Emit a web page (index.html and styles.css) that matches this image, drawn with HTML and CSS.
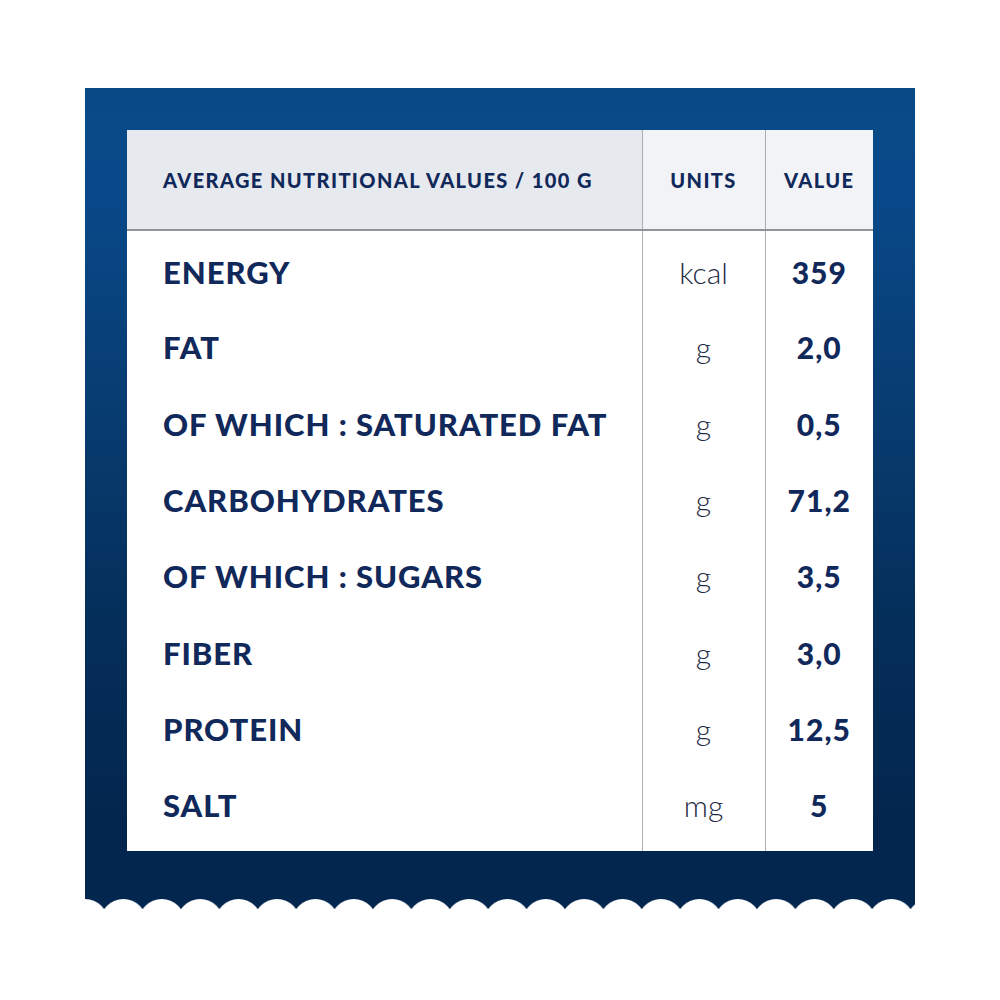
FILE: index.html
```html
<!DOCTYPE html>
<html lang="en">
<head>
<meta charset="utf-8">
<title>Nutritional values</title>
<link rel="stylesheet" href="styles.css">
</head>
<body>
<div class="wrap">
  <div class="panel">
    <table class="nutri">
      <colgroup>
        <col class="c-name"><col class="c-unit"><col class="c-val">
      </colgroup>
      <thead>
        <tr>
          <th class="h-name">AVERAGE NUTRITIONAL VALUES / 100 G</th>
          <th class="h-unit">UNITS</th>
          <th class="h-val">VALUE</th>
        </tr>
      </thead>
      <tbody>
        <tr><td class="name">ENERGY</td><td class="unit">kcal</td><td class="val">359</td></tr>
        <tr><td class="name">FAT</td><td class="unit">g</td><td class="val">2,0</td></tr>
        <tr><td class="name">OF WHICH : SATURATED FAT</td><td class="unit">g</td><td class="val">0,5</td></tr>
        <tr><td class="name">CARBOHYDRATES</td><td class="unit">g</td><td class="val">71,2</td></tr>
        <tr><td class="name">OF WHICH : SUGARS</td><td class="unit">g</td><td class="val">3,5</td></tr>
        <tr><td class="name">FIBER</td><td class="unit">g</td><td class="val">3,0</td></tr>
        <tr><td class="name">PROTEIN</td><td class="unit">g</td><td class="val">12,5</td></tr>
        <tr class="last"><td class="name">SALT</td><td class="unit">mg</td><td class="val">5</td></tr>
      </tbody>
    </table>
  </div>
  <svg class="scallop" width="830" height="15" viewBox="0 0 830 15" aria-hidden="true">
    <defs>
      <pattern id="bumps" patternUnits="userSpaceOnUse" width="38.4" height="15" x="-19.2" y="0">
        <circle cx="19.2" cy="27" r="23" fill="#ffffff"/>
      </pattern>
    </defs>
    <rect x="0" y="0" width="830" height="15" fill="#03264e"/>
    <rect x="0" y="0" width="830" height="15" fill="url(#bumps)"/>
  </svg>
</div>
</body>
</html>
```
FILE: styles.css
```css
html, body {
  margin: 0;
  padding: 0;
  background: #ffffff;
}

.wrap {
  width: 830px;
  padding: 88px 0 0 85px;
}

.panel {
  width: 830px;
  box-sizing: border-box;
  padding: 42px 42px 44px 42px;
  background: linear-gradient(180deg, #084a86 0%, #09498a 12%, #073a6c 45%, #052f5b 65%, #03264e 90%, #03264e 100%);
}

.scallop {
  display: block;
}

.nutri {
  width: 746px;
  height: 721px;
  border-collapse: collapse;
  table-layout: fixed;
  background: #ffffff;
  font-family: "Lato", "Liberation Sans", sans-serif;
  color: #10285a;
}

.c-name { width: 515px; }
.c-unit { width: 123px; }
.c-val { width: 108px; }

.nutri th {
  height: 98px;
  font-size: 20px;
  font-weight: 900;
  letter-spacing: 1.4px;
  border-bottom: 2px solid #8f9499;
  padding: 1px 0 0 0;
  vertical-align: middle;
}

.h-name {
  text-align: left;
  padding-left: 36px !important;
  background: #e6e9ed;
}

.h-unit, .h-val {
  text-align: center;
  background: #f1f3f7;
}

.h-unit, .unit {
  border-left: 1px solid #a9adb2;
  border-right: 1px solid #a9adb2;
}

.nutri td {
  height: 76.3px;
  box-sizing: border-box;
  padding: 6px 0 0 0;
  vertical-align: middle;
}

.nutri tr.last td {
  height: 87px;
  padding-bottom: 11px;
}

.name {
  padding-left: 36px !important;
  font-size: 31px;
  font-weight: 900;
  letter-spacing: 0.95px;
  white-space: nowrap;
}

.unit {
  text-align: center;
  font-size: 30px;
  font-weight: 300;
  color: #1d2a44;
}

.val {
  text-align: center;
  font-size: 30px;
  font-weight: 900;
  letter-spacing: 1px;
}
```
